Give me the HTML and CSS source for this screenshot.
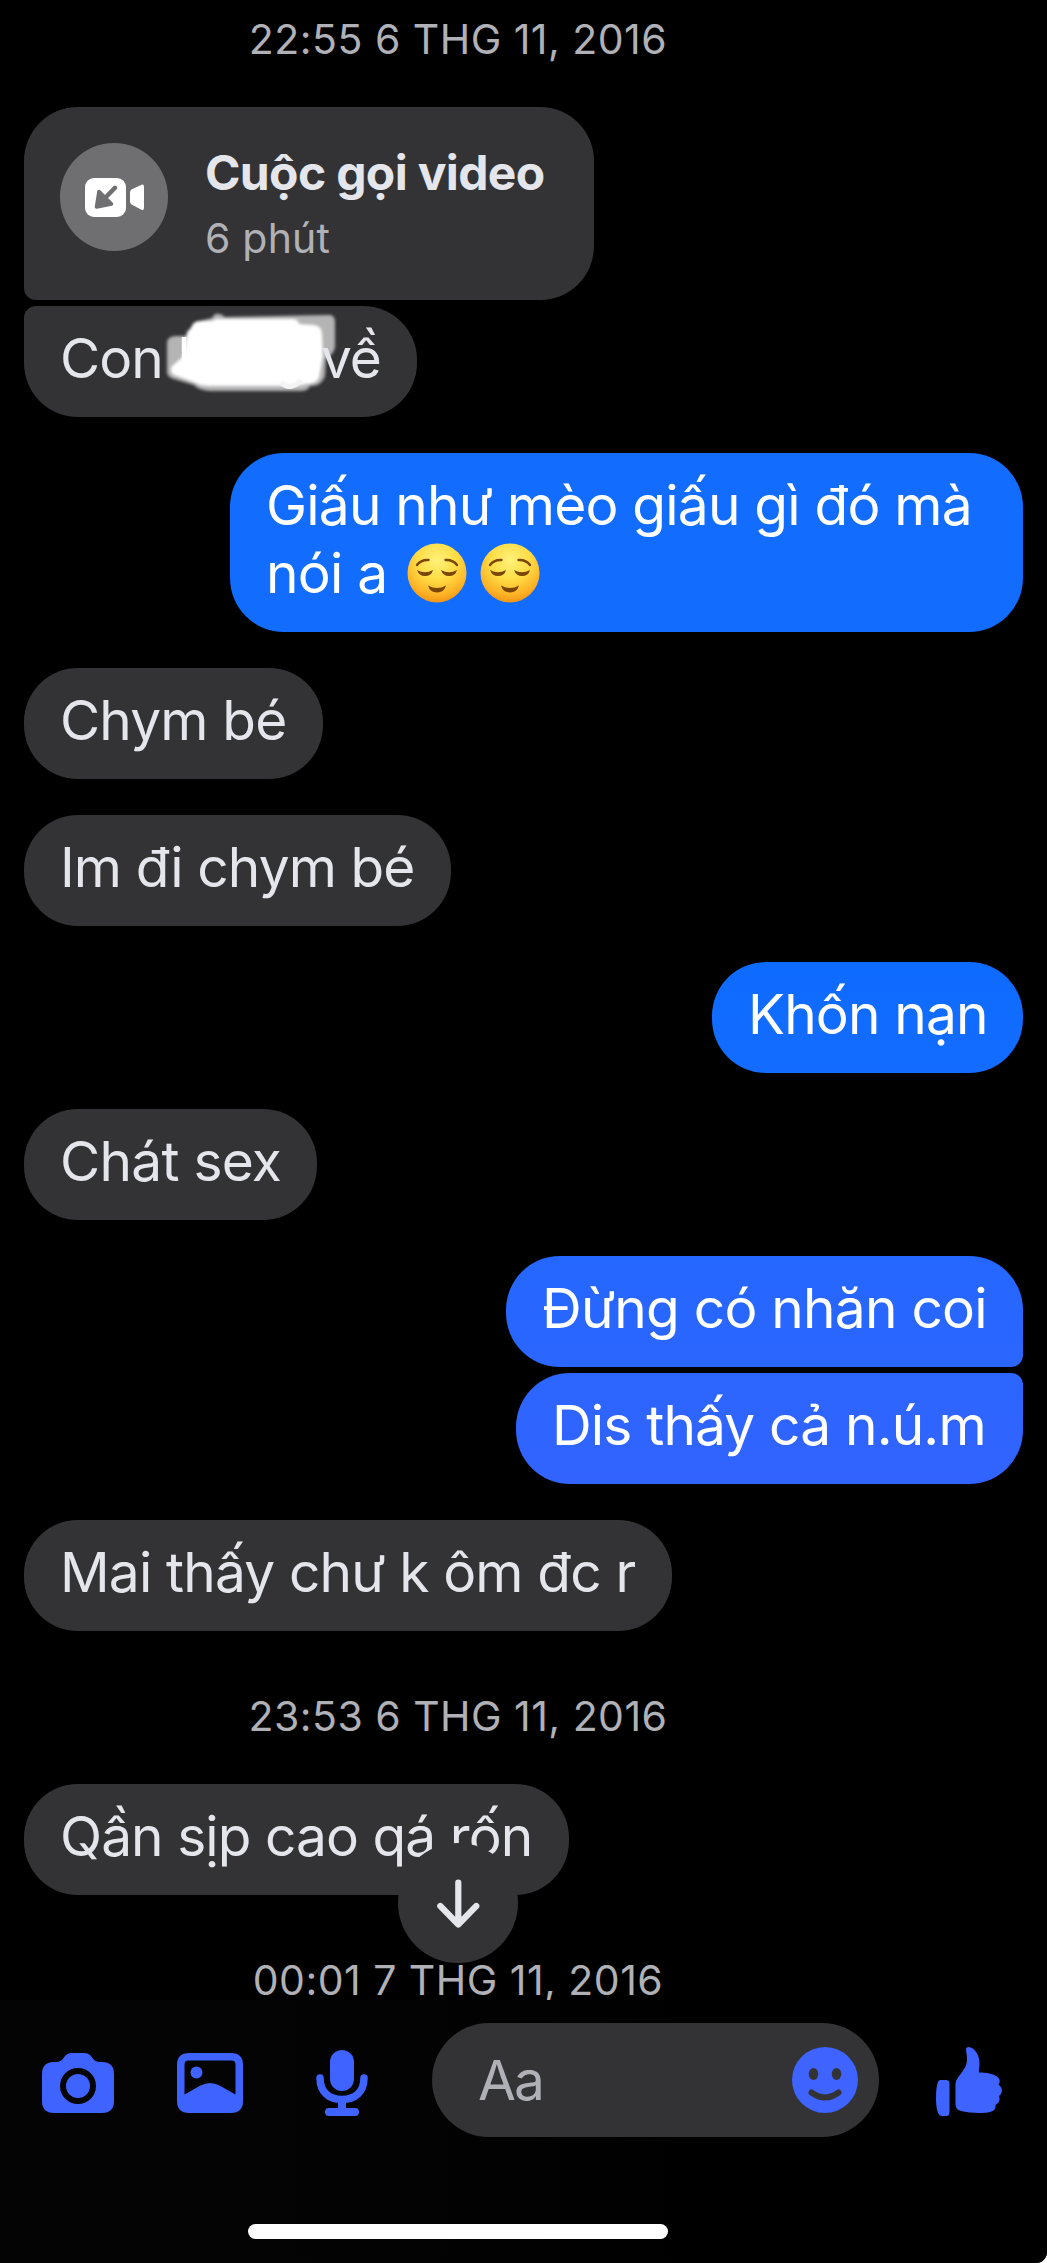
FILE: index.html
```html
<!DOCTYPE html>
<html lang="vi">
<head>
<meta charset="utf-8">
<title>Tin nhắn</title>
<link rel="stylesheet" href="styles.css">
</head>
<body>
<svg width="0" height="0" class="defs" aria-hidden="true">
  <defs>
    <radialGradient id="skin" cx="50%" cy="28%" r="75%">
      <stop offset="0" stop-color="#fff27a"/>
      <stop offset="0.45" stop-color="#ffdc45"/>
      <stop offset="0.8" stop-color="#fdb125"/>
      <stop offset="1" stop-color="#ee8d12"/>
    </radialGradient>
    <symbol id="relieved" viewBox="0 0 60 60">
      <circle cx="30" cy="30" r="29.5" fill="url(#skin)"/>
      <g fill="none" stroke="#7a4505" stroke-width="2.4" stroke-linecap="round">
        <path d="M10 22Q14 16.500 21.500 17"/>
        <path d="M50 22Q46 16.500 38.500 17"/>
      </g>
      <g fill="#7a4505">
        <path d="M10 27Q18 31.500 26 27Q24.500 33 18 33Q12 33 10 27Z"/>
        <path d="M34 27Q42 31.500 50 27Q48.500 33 42 33Q36 33 34 27Z"/>
        <path d="M21 42.500Q30 47.500 39 42.500Q37 49.500 30 49.500Q23 49.500 21 42.500Z"/>
      </g>
    </symbol>
  </defs>
</svg>
<div class="phone">
  <main class="chat">
    <time class="stamp s1">22:55 6 THG 11, 2016</time>
    <div class="bubble in call joined-below">
      <span class="call-icon">
        <svg viewBox="0 0 108 108" width="108" height="108">
          <rect x="25" y="35" width="41" height="39" rx="9" fill="#fff"/>
          <path d="M71.500 46.500L81.500 41.700Q84 40.700 84 43.500V65Q84 67.800 81.500 66.800L71.500 61.500Q70 60.500 70 58.500V49.500Q70 47.300 71.500 46.500Z" fill="#fff"/>
          <path d="M55 44.800L47 53" stroke="#6f6f71" stroke-width="4.500" stroke-linecap="round"/>
          <path d="M39 48.500L51.500 61L36.500 64Z" fill="#6f6f71" stroke="#6f6f71" stroke-width="3.600" stroke-linejoin="round"/>
        </svg>
      </span>
      <div class="call-text">
        <div class="call-title">Cuộc gọi video</div>
        <div class="call-sub">6 phút</div>
      </div>
    </div>
    <div class="bubble in joined-above censored">
      <span>Con</span>
      <svg class="scribble" viewBox="0 0 200 100" width="200" height="100">
        <g class="brush">
          <path d="M62 12Q66 4 75 11L178 9Q185 8 185 16V42Q182 50 176 52L175 70Q172 80 160 80Q158 85 150 85H60Q48 84 44 79L24 73Q17 71 17 66V36Q18 30 26 30L36 30Q36 24 42 22Q42 15 50 15Z" fill="#b4b4b5"/>
          <path d="M42 20Q44 15 52 15H62L66 13H142Q148 13 149 18L164 19Q172 20 172 28L173 50L169 72Q166 78 156 78L148 80H60Q50 80 46 77L24 69Q19 66 22 60L34 50L37 28Z" fill="#fff"/>
        </g>
        <path d="M34 31V60" stroke="#fff" stroke-width="4.500"/>
        <path d="M131 76Q140 86 151 74" stroke="#f4f4f5" stroke-width="5" fill="none"/>
      </svg>
      <span class="after">về</span>
    </div>
    <div class="bubble out gap o1">Giấu như mèo giấu gì đó mà<br>nói a<svg class="emoji"><use href="#relieved"/></svg><svg class="emoji next"><use href="#relieved"/></svg></div>
    <div class="bubble in gap m1">Chym bé</div>
    <div class="bubble in gap m2">Im đi chym bé</div>
    <div class="bubble out gap o2">Khốn nạn</div>
    <div class="bubble in gap m3">Chát sex</div>
    <div class="bubble out gap joined-below o3">Đừng có nhăn coi</div>
    <div class="bubble out joined-above o4">Dis thấy cả n.ú.m</div>
    <div class="bubble in gap m4">Mai thấy chư k ôm đc r</div>
    <time class="stamp s2">23:53 6 THG 11, 2016</time>
    <div class="bubble in m5">Qần sịp cao qá rốn</div>
    <time class="stamp s3">00:01 7 THG 11, 2016</time>
    <button class="scroll-down" aria-label="Xuống cuối">
      <svg viewBox="0 0 120 120" width="120" height="120"><path d="M60.300 39.500V80M42.300 63L60.300 81.500L78.300 63" fill="none" stroke="#e4e6eb" stroke-width="6.200" stroke-linecap="round" stroke-linejoin="round"/></svg>
    </button>
  </main>
  <footer class="composer">
    <div class="tools">
      <svg class="camera" viewBox="0 0 72 60" width="72" height="60">
        <path fill-rule="evenodd" d="M12 9H14Q19 9 21.500 5Q24.500 0 30 0H42Q47.500 0 50.500 5Q53 9 58 9H60Q72 9 72 21V48Q72 60 60 60H12Q0 60 0 48V21Q0 9 12 9ZM36 15A18 18 0 1 0 36 51A18 18 0 1 0 36 15Z"/>
        <circle cx="36" cy="33" r="12"/>
      </svg>
      <svg class="photo" viewBox="0 0 66 60" width="66" height="60">
        <path fill-rule="evenodd" d="M12 0H54Q66 0 66 12V48Q66 60 54 60H12Q0 60 0 48V12Q0 0 12 0ZM11.500 7.500Q7.500 7.500 7.500 11.500V41.500L23.500 32.500Q33 27.500 42.500 32.500L58.500 41.500V11.500Q58.500 7.500 54.500 7.500Z"/>
        <circle cx="19.500" cy="19.500" r="6"/>
      </svg>
      <svg class="mic" viewBox="0 0 52 66" width="52" height="66">
        <rect x="14" y="0" width="24" height="41" rx="12"/>
        <path d="M4 28C4 42 13 49.500 26 49.500S48 42 48 28" fill="none" stroke="#3f63ff" stroke-width="7.500" stroke-linecap="round"/>
        <rect x="22" y="50" width="8" height="12"/>
        <rect x="9" y="58" width="34" height="8" rx="4"/>
      </svg>
    </div>
    <div class="input">
      <span>Aa</span>
      <svg viewBox="0 0 66 66" width="66" height="66">
        <circle cx="33" cy="33" r="33" fill="#3f63ff"/>
        <ellipse cx="21.500" cy="27" rx="4.800" ry="6"/>
        <ellipse cx="44.500" cy="27" rx="4.800" ry="6"/>
        <path d="M19.500 45.500Q33 55.500 46.500 45.500" fill="none" stroke="#333335" stroke-width="6" stroke-linecap="round"/>
      </svg>
    </div>
    <svg class="thumb" viewBox="0 0 66 69" width="66" height="69">
      <path d="M4 33H10Q13.500 33 13.500 36.500V65.500Q13.500 69 10 69H5.500C1.500 69 0 60 0 51S1.200 33 4 33Z"/>
      <path d="M30 2Q30 0 33 0C39 1 43.500 8 43.500 16C43.500 20 42.500 24 43 25.500Q50 25 57 27.500C63 29.500 65.500 33 62.500 37.500C67 41 67 46 63 49C64.500 53 63 56 59.500 58C60 63 57 64.500 52 65.500C45 66.500 32 66 25 64Q19.500 62.500 19.500 57V38C19.500 33 22 30.500 25 26.500C29 21 31 18 31 12C31 8 30 5 30 2Z"/>
    </svg>
    <div class="home"></div>
  </footer>
</div>
</body>
</html>
```
FILE: styles.css
```css
* { box-sizing: border-box; }
body {
  margin: 0;
  background: #fff;
  font-family: Inter, "Noto Sans", sans-serif;
}
.defs { position: absolute; }
.phone {
  width: 1047px;
  height: 2263px;
  background: #000;
  border-bottom-right-radius: 11px;
  overflow: hidden;
}
.chat {
  position: relative;
  display: flex;
  flex-direction: column;
  height: 2000px;
  padding: 14px 24px 0;
}
.stamp {
  width: 868px;
  height: 50px;
  flex: none;
  margin: 60px 0 43px;
  font-size: 41px;
  line-height: 50px;
  letter-spacing: 0.47px;
  text-align: center;
  white-space: nowrap;
  color: #b0b1b6;
}
.stamp.s1 { margin-top: 0; }
.stamp.s3 { margin-bottom: 0; }
.bubble {
  flex: none;
  padding: 18px 36px 25px;
  border-radius: 54px;
  font-size: 55px;
  line-height: 68px;
  letter-spacing: -0.82px;
  white-space: nowrap;
}
.gap { margin-top: 36px; }
.in { align-self: flex-start; background: #333335; color: #e4e6eb; }
.out { align-self: flex-end; background: #126dff; color: #fff; }
.in.joined-below { border-bottom-left-radius: 12px; margin-bottom: 6px; }
.in.joined-above { border-top-left-radius: 12px; }
.out.joined-below { border-bottom-right-radius: 12px; margin-bottom: 6px; }
.out.joined-above { border-top-right-radius: 12px; }

/* outgoing bubbles pick up more violet further down the thread */
.o1 { width: 793px; height: 179px; letter-spacing: -0.78px; }
.o2 { width: 311px; background: linear-gradient(#0e6bff, #136cff); }
.o3 { width: 517px; background: linear-gradient(#2467ff, #2b66ff); letter-spacing: -0.75px; }
.o4 { width: 507px; background: linear-gradient(#2c65ff, #3263ff); }
.m1 { width: 299px; }
.m2 { width: 427px; letter-spacing: -0.9px; }
.m3 { width: 293px; letter-spacing: -0.72px; }
.m4 { width: 648px; }
.m5 { width: 545px; letter-spacing: -0.93px; }

.call {
  display: flex;
  gap: 37px;
  width: 570px;
  height: 193px;
  padding: 36px;
}
.call-icon {
  width: 108px;
  height: 108px;
  border-radius: 50%;
  background: #6f6f71;
}
.call-icon svg { display: block; }
.call-title { font-size: 48px; font-weight: 700; line-height: 60px; letter-spacing: -0.65px; }
.call-sub { margin-top: 10px; font-size: 41px; line-height: 50px; letter-spacing: 0.2px; color: #b0b1b6; }

.censored {
  position: relative;
  display: flex;
  justify-content: space-between;
  width: 393px;
  letter-spacing: -0.9px;
}
.scribble { position: absolute; left: 126px; top: 0; }
.brush { filter: blur(1.5px); }
.after { position: relative; }

.emoji { width: 60px; height: 60px; vertical-align: -10px; margin-left: 20px; }
.emoji.next { margin-left: 13px; }

.scroll-down {
  position: absolute;
  left: 398px;
  top: 1843px;
  width: 120px;
  height: 120px;
  padding: 0;
  border: 0;
  border-radius: 50%;
  background: #333335;
}
.scroll-down svg { display: block; }

.composer {
  position: relative;
  display: grid;
  grid-template-columns: 390px 504px 66px;
  grid-template-rows: 114px 87px 15px;
  align-items: center;
  height: 263px;
  padding: 23px 0 24px 42px;
  background: linear-gradient(90deg, #040405, #030303 40%, #000 65%);
  fill: #3f63ff;
}
.tools { display: flex; align-items: center; margin-top: 6px; }
.photo { margin-left: 63px; }
.mic { margin-left: 73px; }
.input {
  display: flex;
  align-items: center;
  justify-content: space-between;
  width: 447px;
  height: 114px;
  padding: 0 21px 0 46px;
  border-radius: 57px;
  background: #333335;
  color: #b0b1b6;
  font-size: 55px;
  line-height: 68px;
  letter-spacing: -2px;
  fill: #333335;
}
.thumb { margin-top: 3px; }
.home {
  grid-row: 3;
  grid-column: 1 / -1;
  width: 420px;
  height: 15px;
  margin-left: 206px;
  border-radius: 8px;
  background: #fff;
}
```
